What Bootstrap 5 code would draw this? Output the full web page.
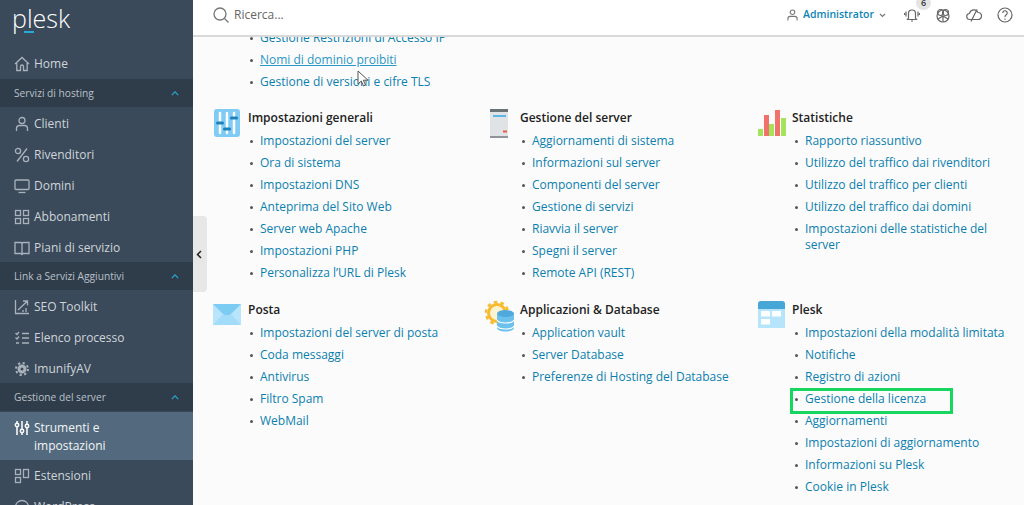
<!doctype html>
<html lang="it"><head><meta charset="utf-8"><title>Plesk</title>
<link href="https://cdn.jsdelivr.net/npm/bootstrap@5.3.0/dist/css/bootstrap.min.css" rel="stylesheet">
<style>
html,body{height:505px;overflow:hidden}
body{font-family:"Open Sans",sans-serif;font-size:12px;background:#fbfbfb;color:#222}
.shell{height:505px;overflow:hidden}
.side{width:193px;flex:none;background:#3a4a5b;color:#d3d8dd;overflow:hidden;height:505px}
.logo{height:48px;flex:none;padding-left:12px;color:#fff;font-size:25px;font-weight:300;line-height:36px;position:relative}
.logo i{position:absolute;left:24px;top:31px;width:10px;height:2px;background:#28aad6}
.nitem{height:31px;flex:none;padding:2px 0 0 14px;font-size:12px;color:#cfd4d9;text-decoration:none;line-height:18px}
.nitem.flat{padding-top:0}
.nitem svg{width:16px;height:16px;flex:none;margin-right:4px;stroke:#a9b2bb;fill:none;stroke-width:1.3}
.band{height:28px;flex:none;padding:1px 14px 0 14px;background:#2f3c4a;font-size:10.2px;color:#b9c1c9}
.band svg{width:8px;height:5px;stroke:#28aad6;fill:none;stroke-width:1.4}
.nitem.on{height:48px;background:#536a7e;color:#f2f4f6;padding-top:7px;margin-top:1px}
.on svg{stroke:#fff;margin-top:1px;stroke-width:1.5}
.handle{position:absolute;left:193px;top:216px;width:14px;height:76px;background:#e7e7e7;border-radius:0 4px 4px 0;padding-left:3px}
.handle svg{width:6px;height:9px;stroke:#222;fill:none;stroke-width:1.5}
.mainp{flex:1;min-width:0;height:505px;overflow:hidden}
.top{height:37px;background:#fff;border-bottom:2px solid #d9d9d9;flex:none;padding:0 11px 5px 20px;position:relative;z-index:2}
.srch{color:#666;font-size:12px;gap:5px}
.srch svg{width:16px;height:16px;stroke:#777;fill:none;stroke-width:1.3}
.adm{color:#0b84b5;font-weight:600;font-size:10.5px;gap:5px;margin-right:18px}
.adm svg{stroke:#777;fill:none;stroke-width:1.2}
.tico{width:16px;height:16px;stroke:#666;fill:none;stroke-width:1.2;flex:none}
.ticos{gap:15px}
.bell{position:relative}
.cnt{position:absolute;left:12px;top:-11px;width:15px;height:14px;line-height:14px;text-align:center;background:#e4e4e4;border-radius:50%;font-size:9px;font-weight:600;color:#333}
.pane{flex:1;overflow:hidden;padding-left:20px;margin-top:-10px;position:relative}
.cols{display:grid;grid-template-columns:repeat(3,272px);grid-auto-rows:192px;width:816px;margin-top:14px}
.gt{font-weight:600;font-size:12px;color:#222;line-height:22px;height:23px;margin:0}
.gt svg{flex:none;overflow:visible}
.lst{margin:0 0 0 35px;padding:0;list-style:none}
.lst.third{margin-left:36px;max-width:222px}
.lst li{position:relative;padding:3px 0 3px 12px;line-height:16px;font-size:12px}
.lst li::before{content:"";position:absolute;left:2px;top:10px;width:3px;height:3px;border-radius:50%;background:#555}
.lst a{color:#0b7fae;text-decoration:none}
.lst a.hov{color:#2a97c4;text-decoration:underline}
.mark1{position:absolute;left:-3px;top:0;width:163px;height:26px;border:3px solid #17d65f}
.cur{position:absolute;left:164px;top:43px;z-index:1}
</style></head><body>
<div class="shell d-flex position-relative">
<aside class="side d-flex flex-column">
<div class="logo">plesk<i></i></div>
<a class="nitem flat d-flex align-items-center"><svg viewBox="0 0 16 16"><path d="M1 8 8 1.500 15 8M2.800 7v7.500h3.700v-4a1.500 1.500 0 0 1 3 0v4h3.700V7"/></svg>Home</a>
<div class="band d-flex align-items-center justify-content-between"><span>Servizi di hosting</span><svg viewBox="0 0 10 6"><path d="M1 5 5 1l4 4"/></svg></div>
<a class="nitem d-flex align-items-center"><svg viewBox="0 0 16 16"><circle cx="8" cy="4.500" r="3"/><path d="M2.500 15v-2.500a3 3 0 0 1 3-3h5a3 3 0 0 1 3 3V15"/></svg>Clienti</a>
<a class="nitem d-flex align-items-center"><svg viewBox="0 0 16 16"><circle cx="4" cy="4" r="2.600"/><circle cx="12" cy="12" r="2.600"/><path d="M13 1.500 3 14.500"/></svg>Rivenditori</a>
<a class="nitem d-flex align-items-center"><svg viewBox="0 0 16 16"><rect x="1" y="2" width="14" height="9.500" rx="1"/><path d="M4.500 14.500h7"/></svg>Domini</a>
<a class="nitem d-flex align-items-center"><svg viewBox="0 0 16 16"><rect x="1.500" y="1.500" width="5" height="5"/><rect x="9.500" y="1.500" width="5" height="5"/><rect x="1.500" y="9.500" width="5" height="5"/><rect x="9.500" y="9.500" width="5" height="5"/></svg>Abbonamenti</a>
<a class="nitem d-flex align-items-center"><svg viewBox="0 0 16 16"><path d="M1 2.500h6l1 1 1-1h6v11H9l-1 1-1-1H1zM8 3.500v11"/></svg>Piani di servizio</a>
<div class="band d-flex align-items-center justify-content-between"><span>Link a Servizi Aggiuntivi</span><svg viewBox="0 0 10 6"><path d="M1 5 5 1l4 4"/></svg></div>
<a class="nitem d-flex align-items-center"><svg viewBox="0 0 16 16"><path d="M1.500 1v13.500H15M4 11 13.500 2M9 2h4.500v4.500M9 13v-2M12 13V9"/></svg>SEO Toolkit</a>
<a class="nitem d-flex align-items-center"><svg viewBox="0 0 16 16"><path d="M1.500 3 3 4.500 5 2M1.500 7.500 3 9l2-2.500M2 13h3M8 3.500h7M8 8h7M8 13h7"/></svg>Elenco processo</a>
<a class="nitem d-flex align-items-center"><svg viewBox="0 0 16 16"><circle cx="8" cy="8" r="3" stroke-width="3"/><circle cx="8" cy="8" r="6" stroke-dasharray="2.200 2.500" stroke-width="2"/></svg>ImunifyAV</a>
<div class="band d-flex align-items-center justify-content-between"><span>Gestione del server</span><svg viewBox="0 0 10 6"><path d="M1 5 5 1l4 4"/></svg></div>
<a class="nitem on d-flex"><svg viewBox="0 0 16 16"><path d="M3 1v14M8 1v14M13 1v14"/><circle cx="3" cy="5" r="1.700" fill="#536a7e"/><circle cx="8" cy="11" r="1.700" fill="#536a7e"/><circle cx="13" cy="6" r="1.700" fill="#536a7e"/></svg><span>Strumenti e<br>impostazioni</span></a>
<a class="nitem flat d-flex align-items-center"><svg viewBox="0 0 16 16"><rect x="1.500" y="1.500" width="5" height="5"/><rect x="1.500" y="9.500" width="5" height="5"/><rect x="9.500" y="1.500" width="5" height="8"/></svg>Estensioni</a>
<a class="nitem flat d-flex align-items-center"><svg viewBox="0 0 16 16"><circle cx="8" cy="8" r="6.500"/><path d="M4 6l3 7 2-5 2 5 1.500-6"/></svg>WordPress</a>
</aside>
<div class="handle d-flex align-items-center"><svg viewBox="0 0 6 9"><path d="M5 1 1.500 4.500 5 8"/></svg></div>
<div class="mainp d-flex flex-column">
<header class="top d-flex align-items-center justify-content-between">
<div class="srch d-flex align-items-center"><svg viewBox="0 0 16 16"><circle cx="7" cy="7" r="6"/><path d="m11.500 11.500 4 4"/></svg><span>Ricerca...</span></div>
<div class="d-flex align-items-center">
<div class="adm d-flex align-items-center"><svg width="11" height="12" viewBox="0 0 12 13"><circle cx="6" cy="3.500" r="2.500"/><path d="M1 12.500v-2a2.500 2.500 0 0 1 2.500-2.500h5a2.500 2.500 0 0 1 2.500 2.500v2"/></svg><span>Administrator</span><svg width="7" height="5" viewBox="0 0 7 5"><path d="m1 1 2.500 2.500L6 1"/></svg></div>
<div class="ticos d-flex align-items-center">
<div class="bell"><span class="cnt">6</span><svg class="tico d-block" viewBox="0 0 16 16"><path d="M4.500 11V6.500a3.500 3.500 0 0 1 7 0V11l1 1.500h-9zM7 14h2M2 4.500v5M14 4.500v5M.5 6v2M15.500 6v2"/></svg></div>
<svg class="tico" viewBox="0 0 16 16"><circle cx="8" cy="9" r="6"/><circle cx="5.500" cy="5.500" r="3"/><circle cx="10.500" cy="5.500" r="3"/><path d="M8 9v6M3 12l5-3 5 3"/></svg>
<svg class="tico" viewBox="0 0 16 16"><path d="M4 12.500a3 3 0 0 1-.5-6 4.500 4.500 0 0 1 8.500-1 3.500 3.500 0 0 1 0 7zM5 14.500 11 2.500"/></svg>
<svg class="tico" viewBox="0 0 16 16"><circle cx="8" cy="8" r="7"/><path d="M5.800 6a2.200 2.200 0 1 1 3.400 1.800C8.400 8.400 8 8.800 8 10M8 11.500v1.200"/></svg>
</div></div>
</header>
<main class="pane">
<svg class="cur" width="13" height="18" viewBox="0 0 13 18"><path d="M1 1v13l3.300-3 2.200 5 2-1-2.200-4.800H11z" fill="#fff" stroke="#555"/></svg>
<ul class="lst">
<li><a href="#">Gestione Restrizioni di Accesso IP</a></li>
<li><a href="#" class="hov">Nomi di dominio proibiti</a></li>
<li><a href="#">Gestione di versioni e cifre TLS</a></li>
</ul>
<div class="cols">
<section>
<h6 class="gt d-flex"><svg width="35" height="23" viewBox="0 0 35 23"><rect x="1" y="2" width="26" height="28" rx="3" fill="#7ecbf6"/><path d="M7 6v20M14 6v20M21 6v20" stroke="#fff" stroke-width="2.500" stroke-linecap="round"/><path d="M4.500 16h5M11.500 22h5M18.500 11h5" stroke="#1b83b9" stroke-width="3" stroke-linecap="round"/></svg>Impostazioni generali</h6>
<ul class="lst"><li><a href="#">Impostazioni del server</a></li><li><a href="#">Ora di sistema</a></li><li><a href="#">Impostazioni DNS</a></li><li><a href="#">Anteprima del Sito Web</a></li><li><a href="#">Server web Apache</a></li><li><a href="#">Impostazioni PHP</a></li><li><a href="#">Personalizza l’URL di Plesk</a></li></ul>
</section>
<section>
<h6 class="gt d-flex"><svg width="35" height="23" viewBox="0 0 35 23"><rect x="5" y="2" width="18" height="29" rx="1.500" fill="#dfe3e6"/><path d="M5 3.500h18" stroke="#6b7276" stroke-width="3"/><path d="M5 30h18" stroke="#8f959a" stroke-width="2"/><path d="M8 9h13" stroke="#4fb3e6" stroke-width="1.800"/><path d="M18 24.500h4" stroke="#ef5a45" stroke-width="2"/></svg>Gestione del server</h6>
<ul class="lst"><li><a href="#">Aggiornamenti di sistema</a></li><li><a href="#">Informazioni sul server</a></li><li><a href="#">Componenti del server</a></li><li><a href="#">Gestione di servizi</a></li><li><a href="#">Riavvia il server</a></li><li><a href="#">Spegni il server</a></li><li><a href="#">Remote API (REST)</a></li></ul>
</section>
<section>
<h6 class="gt d-flex"><svg width="35" height="23" viewBox="0 0 35 23"><rect x="1" y="22" width="5" height="7" fill="#a6e35c"/><rect x="7" y="8" width="5" height="21" fill="#f2716a"/><rect x="12" y="17" width="5" height="12" fill="#a6e35c"/><rect x="18" y="3" width="5" height="26" fill="#f2716a"/><rect x="24" y="11" width="5" height="18" fill="#a6e35c"/></svg>Statistiche</h6>
<ul class="lst third"><li><a href="#">Rapporto riassuntivo</a></li><li><a href="#">Utilizzo del traffico dai rivenditori</a></li><li><a href="#">Utilizzo del traffico per clienti</a></li><li><a href="#">Utilizzo del traffico dai domini</a></li><li><a href="#">Impostazioni delle statistiche del server</a></li></ul>
</section>
<section>
<h6 class="gt d-flex"><svg width="35" height="23" viewBox="0 0 35 23"><rect x="0" y="5" width="28" height="21" fill="#b8e5fb"/><path d="M0 5h28L18 15q-4 3-8 0z" fill="#7ccbf3"/><path d="M0 26 10 15q4 3 8 0l10 11z" fill="#a3dcf8"/></svg>Posta</h6>
<ul class="lst"><li><a href="#">Impostazioni del server di posta</a></li><li><a href="#">Coda messaggi</a></li><li><a href="#">Antivirus</a></li><li><a href="#">Filtro Spam</a></li><li><a href="#">WebMail</a></li></ul>
</section>
<section>
<h6 class="gt d-flex"><svg width="35" height="23" viewBox="0 0 35 23"><circle cx="12" cy="14" r="8.500" fill="#fdf3d0" stroke="#f6bb2f" stroke-width="3"/><circle cx="12" cy="14" r="11" fill="none" stroke="#f6bb2f" stroke-width="2.500" stroke-dasharray="3.500 3.400"/><path d="M12 15v14c0 2 4 3.500 8.500 3.500S29 31 29 29V15z" fill="#6cc1ec"/><ellipse cx="20.500" cy="14.500" rx="8.500" ry="3.500" fill="#4fa9da"/><path d="M12 21c1 2 4.500 3 8.500 3s7.500-1 8.500-3M12 27c1 2 4.500 3 8.500 3s7.500-1 8.500-3" fill="none" stroke="#fff" stroke-width="1.200"/></svg>Applicazioni &amp; Database</h6>
<ul class="lst"><li><a href="#">Application vault</a></li><li><a href="#">Server Database</a></li><li><a href="#">Preferenze di Hosting del Database</a></li></ul>
</section>
<section>
<h6 class="gt d-flex"><svg width="35" height="23" viewBox="0 0 35 23"><path d="M1 5a3 3 0 0 1 3-3h21a3 3 0 0 1 3 3v24H1z" fill="#b6e5fb"/><path d="M1 5a3 3 0 0 1 3-3h21a3 3 0 0 1 3 3v5H1z" fill="#46a7d6"/><rect x="4" y="12" width="9" height="5.500" fill="#fff"/><rect x="15" y="12" width="9" height="5.500" fill="#fff"/><rect x="4" y="20" width="9" height="5.500" fill="#fff"/></svg>Plesk</h6>
<ul class="lst third"><li><a href="#">Impostazioni della modalità limitata</a></li><li><a href="#">Notifiche</a></li><li><a href="#">Registro di azioni</a></li><li><a href="#">Gestione della licenza</a><span class="mark1"></span></li><li><a href="#">Aggiornamenti</a></li><li><a href="#">Impostazioni di aggiornamento</a></li><li><a href="#">Informazioni su Plesk</a></li><li><a href="#">Cookie in Plesk</a></li></ul>
</section>
</div>
</main>
</div>
</div>
</body></html>
